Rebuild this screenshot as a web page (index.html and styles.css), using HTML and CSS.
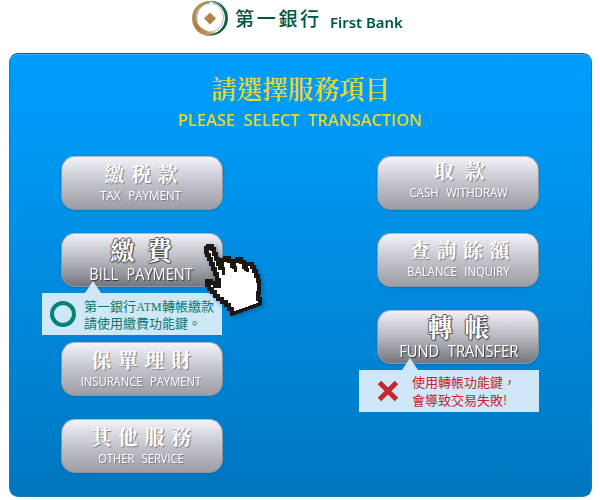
FILE: index.html
```
<!DOCTYPE html>
<html lang="zh-Hant">
<head>
<meta charset="utf-8">
<title>First Bank ATM</title>
<link rel="stylesheet" href="styles.css">
</head>
<body>
<header class="brand">
  <svg class="logo" viewBox="0 0 38 37" width="38" height="37">
    <defs><linearGradient id="gold" x1="0" y1="0" x2="1" y2="1"><stop offset="0" stop-color="#c39b66"/><stop offset=".5" stop-color="#ad7b40"/><stop offset="1" stop-color="#d9bd97"/></linearGradient>
    <linearGradient id="green" x1="0" y1="0" x2="1" y2="1"><stop offset="0" stop-color="#8fb9aa"/><stop offset=".5" stop-color="#16694f"/><stop offset="1" stop-color="#005840"/></linearGradient></defs>
    <path fill="url(#gold)" d="M23 1.500C10-1 1 8 1 18.500C1 28 9 36 18 36C24 36 28 34 30 32C19 34 5 29 5 17C5 9 13 2.500 23 1.500Z"/>
    <path fill="url(#green)" d="M16 1.500C27-2 37 7 37 18C37 29 28 37 15 35C26 35 34 28 34 18C34 8 26 2 16 1.500Z"/>
    <path fill="none" stroke="#5f9785" stroke-width=".8" d="M19 3C9 4 4 13 6.500 22"/>
    <path fill="none" stroke="#cdae82" stroke-width="1" d="M22 3.500C34 7 35 21 28 28C25 31 22 32 18 32"/>
    <path fill="#b18347" d="M19 12.500L25 18.500L19 24.500L13 18.500Z"/>
  </svg>
  <span class="brand-zh">第一銀行</span>
  <span class="brand-en">First Bank</span>
</header>
<main class="panel">
  <h1 class="title">請選擇服務項目</h1>
  <p class="subtitle">PLEASE SELECT TRANSACTION</p>
  <div class="columns">
    <div class="column">
      <div class="key"><b class="zh">繳税款</b><span class="en e-tax">TAX PAYMENT</span></div>
      <div class="key active bill"><b class="zh">繳費</b><span class="en e-bill">BILL PAYMENT</span>
        <div class="tip tip-ok">
          <svg class="mark" width="28" height="28" viewBox="0 0 28 28"><circle cx="14" cy="14" r="11" fill="none" stroke="#008476" stroke-width="4"/></svg>
          <p class="note">第一銀行<span class="atm">ATM</span>轉帳繳款<br>請使用繳費功能鍵。</p>
        </div>
        <svg class="hand" width="62" height="76" viewBox="0 0 62 76" shape-rendering="crispEdges"><path fill="#fff" stroke="#1c1715" stroke-width="3.600" d="M4 5H6V3H10V6H12V11H14V16H16V21H18V25H20V17H23V15H27V18H30V23H32V18H35V16H39V19H42V24H44V21H50V24H52V28H54V33H56V38H57V50H56V56H58V61L30 71V66H27V62H24V59H20V56H16V53H13V49H10V46H7V42H5V38H9V40H13V43H17V37H15V31H13V26H11V21H9V16H7V12H5V9H4Z"/><path d="M19 22V25H21V30H23M31 21V24H33V29M43 23V26H45V29" fill="none" stroke="#1c1715" stroke-width="3"/></svg>
      </div>
      <div class="key"><b class="zh">保單理財</b><span class="en e-ins">INSURANCE PAYMENT</span></div>
      <div class="key"><b class="zh">其他服務</b><span class="en e-other">OTHER SERVICE</span></div>
    </div>
    <div class="column right">
      <div class="key raised"><b class="zh two">取款</b><span class="en e-cash">CASH WITHDRAW</span></div>
      <div class="key raised2"><b class="zh">查詢餘額</b><span class="en e-bal">BALANCE INQUIRY</span></div>
      <div class="key active fund"><b class="zh">轉帳</b><span class="en e-fund">FUND TRANSFER</span>
        <div class="tip tip-no">
          <svg class="mark" width="28" height="28" viewBox="0 0 28 28"><path d="M5.500 5.500L22.500 22.500M22.500 5.500L5.500 22.500" stroke="#c52832" stroke-width="5"/></svg>
          <p class="note">使用轉帳功能鍵，<br>會導致交易失敗!</p>
        </div>
      </div>
    </div>
  </div>
</main>
</body>
</html>
```

FILE: styles.css
```
* { box-sizing: border-box; }
body {
  margin: 0;
  width: 600px;
  height: 500px;
  overflow: hidden;
  background: #fff;
  font-family: "Open Sans", "Noto Sans CJK TC", sans-serif;
}
.brand {
  display: flex;
  height: 53px;
  padding-left: 191px;
  color: #00573f;
  white-space: nowrap;
}
.logo { flex: none; }
.brand-zh {
  margin: 8px 0 0 6px;
  font: 500 19px/20px "Noto Sans CJK TC", sans-serif;
  letter-spacing: 2.7px;
}
.brand-en {
  margin: 12px 0 0 8px;
  font: 600 15px/20px "Noto Sans", sans-serif;
  transform: scaleX(.995);
  transform-origin: left;
}
.panel {
  width: 583px;
  height: 444px;
  margin-left: 9px;
  padding-top: 19px;
  border: 1px solid #177bb6;
  border-top-color: #075b91;
  border-radius: 9px;
  background: linear-gradient(#009dfd, #0098f3 20%, #0079c3 94%, #0075bb);
  box-shadow: inset 0 1px #38b0ff;
}
.title {
  margin: 0 0 0 201px;
  font: 600 25.600px/30px "Noto Serif CJK TC", "Noto Sans CJK TC", serif;
  color: #ead72c;
  white-space: nowrap;
}
.subtitle {
  width: max-content;
  margin: 7px 0 0 168px;
  font: 600 15.500px/20px "Open Sans", sans-serif;
  word-spacing: 4px;
  color: #ead72c;
  white-space: nowrap;
  transform: scaleX(1.06);
  transform-origin: left;
}
.columns {
  display: flex;
  justify-content: space-between;
  padding: 26px 52px 0 51px;
}
.column { width: 162px; }
.key {
  position: relative;
  display: flex;
  flex-direction: column;
  align-items: center;
  height: 54px;
  margin-bottom: 23px;
  padding-top: 6px;
  border: 1px solid #8e949f;
  border-top-color: #adb8c9;
  border-radius: 14px;
  background: linear-gradient(#f3f3fa, #c2c3cb 50%, #9d9ea5);
  box-shadow: 0 1px 2px #0060a080;
  color: #fff;
  white-space: nowrap;
}
.bill { margin-bottom: 55px; }
.active {
  padding-top: 3px;
  background: linear-gradient(#f0f0f7, #b7b8c0 50%, #76777e);
}
.zh {
  font: 700 20px/22px "Noto Serif CJK TC", "Noto Sans CJK TC", serif;
  letter-spacing: 6.600px;
  margin-left: 5px;
  text-shadow: 1px 1px 1px #777a82;
}
.right .zh { margin-left: 10px; }
.right .two { margin-left: 14px; letter-spacing: 11px; }
.active .zh {
  margin-left: 10px;
  font-size: 25px;
  line-height: 25px;
  letter-spacing: 12px;
  text-shadow: 1px 0 #555, -1px 0 #555, 0 1px #555, 0 -1px #555, 1px 1px 1px #555;
}
.right .active .zh { margin-left: 13px; }
.en {
  margin: 2px 2px 0 0;
  font: 400 12.500px/18px "Open Sans", sans-serif;
  word-spacing: 5px;
  text-shadow: 1px 1px 1px #777a82;
}
.active .en {
  margin-top: 2px;
  font-size: 15.500px;
  line-height: 20px;
  text-shadow: 1px 1px 1px #333;
}
.raised { padding-top: 3px; }
.raised2 { padding-top: 5px; }
.right .key .en { margin-right: -1px; }
.e-tax { transform: scaleX(.93); }
.e-bill { transform: scaleX(.94); }
.e-ins { transform: scaleX(.9); }
.e-other { transform: scaleX(.89); }
.e-cash { transform: scaleX(.915); }
.e-bal { transform: scaleX(.905); }
.e-fund { transform: scaleX(.95); }
.tip {
  position: absolute;
  z-index: 1;
  left: -20px;
  top: 59px;
  width: 180px;
  height: 42px;
  display: flex;
  align-items: center;
  background: #cfe7f7;
}
.tip::before {
  content: "";
  position: absolute;
  left: 43px;
  top: -12px;
  border: 8px solid transparent;
  border-top: 0;
  border-bottom: 12px solid #cfe7f7;
}
.mark { flex: none; margin-left: 7px; }
.note {
  margin: 0 0 0 7px;
  font: 400 13px/16px "Noto Sans CJK TC", sans-serif;
  color: #08796e;
}
.atm {
  display: inline-block;
  width: 26px;
  font-family: "Liberation Serif", serif;
  font-size: 12px;
  text-align: center;
}
.tip-no { left: -19px; }
.tip-no .mark { margin-left: 15px; }
.tip-no .note { margin-left: 10px; line-height: 18px; color: #c42631; }
.hand {
  position: absolute;
  z-index: 2;
  left: 140px;
  top: 9px;
  filter: drop-shadow(2px 2px 2px #004b7c80);
}
```
